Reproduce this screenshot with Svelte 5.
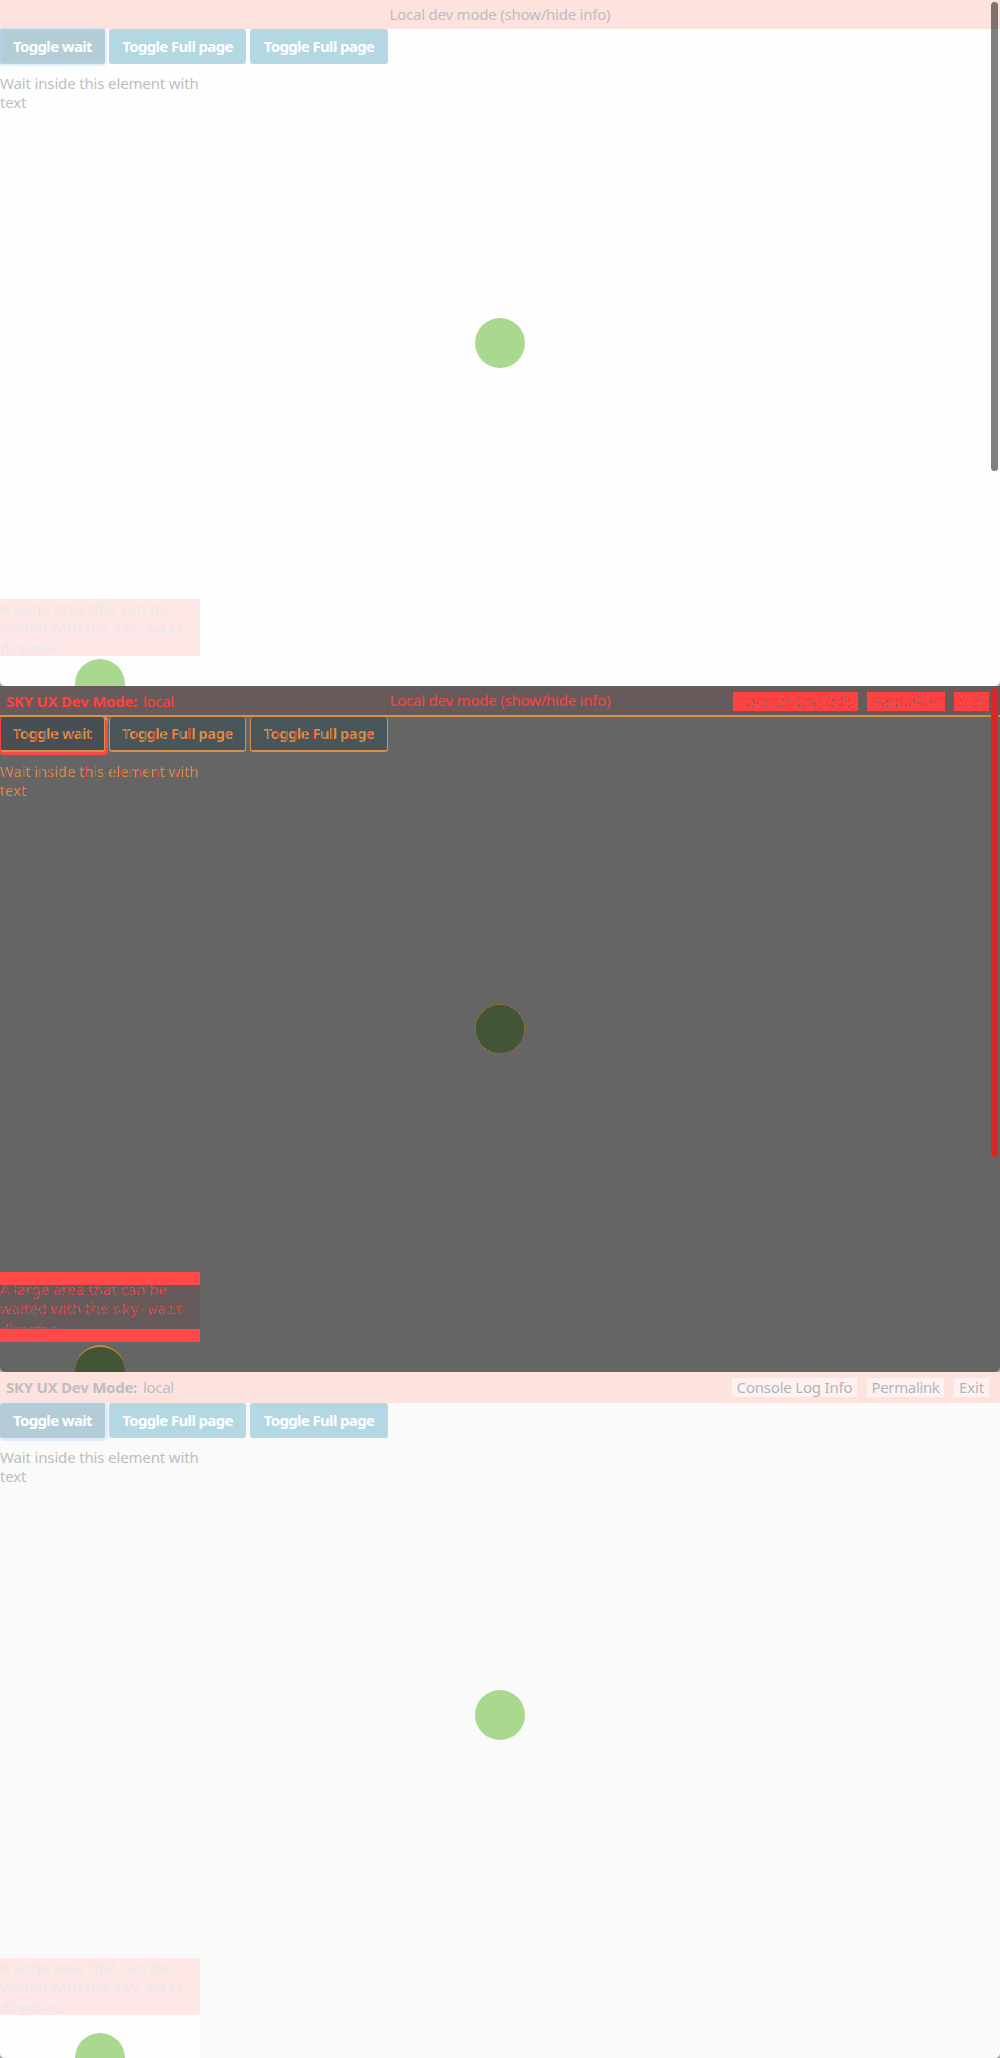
<script>
  const panels = [
    { kind: 'before', toggle: true, dev: false },
    { kind: 'diff', toggle: true, dev: true },
    { kind: 'after', toggle: false, dev: true },
  ];
  const buttons = ['Toggle wait', 'Toggle Full page', 'Toggle Full page'];
  const actions = ['Console Log Info', 'Permalink', 'Exit'];
</script>

<main>
  {#each panels as panel}
    <section class="panel {panel.kind}">
      <header>
        <div class="mode">
          {#if panel.dev}<strong>SKY UX Dev Mode:</strong><span class="local">local</span>{/if}
        </div>
        <div class="toggle">
          {#if panel.toggle}<span class="info">Local dev mode (show/hide info)</span>{/if}
        </div>
        <nav>
          {#if panel.dev}
            {#each actions as action, i}
              <a class="action a{i}" href="#top"><span class="ink">{action}</span></a>
            {/each}
          {/if}
        </nav>
      </header>
      <div class="buttons">
        {#each buttons as label, i}
          <button class="b{i}"><span class="ink">{label}</span></button>
        {/each}
      </div>
      <p class="wait"><span class="ink">Wait inside this element with<br />text</span></p>
      <div class="page-wait"><i class="dot"></i></div>
      <div class="area">
        <p><span class="ink">A large area that can be<br />waited with the <code>sky-wait</code><br />directive.</span></p>
      </div>
      <div class="area-wait"><i class="dot"></i></div>
      {#if panel.kind !== 'after'}<div class="scroll"></div>{/if}
    </section>
  {/each}
</main>

<style>
  :global(body) { background: #fefefe; }
  main { width: 1000px; height: 2058px; overflow: hidden; font: 15px/19px "Noto Sans", sans-serif; background: #a8a8a8; }
  .panel {
    position: relative; display: flex; flex-direction: column; box-sizing: border-box;
    width: 1000px; height: 686px; overflow: hidden; border-radius: 0 0 5px 5px;
    background: #fefefe; color: #bdbec0;
  }
  .after { background: #fafafa; }
  .diff { background: #656565; }
  header {
    flex: none; box-sizing: border-box; display: grid; grid-template-columns: 1fr 222px 1fr; align-items: center;
    height: 29px; background: #fee2dd; white-space: nowrap;
  }
  .after header { height: 31px; }
  .diff header { height: 31px; background: #675a5a; color: #ff4141; border-bottom: 2px solid #d98e48; }
  .mode { display: flex; gap: 6px; padding-left: 6px; }
  .diff .mode { padding-top: 2px; }
  strong { width: 131px; letter-spacing: -0.25px; }
  .local { letter-spacing: -0.3px; }
  .toggle { text-align: center; letter-spacing: -0.22px; }
  nav { display: flex; justify-content: flex-end; gap: 10px; padding-right: 11px; }
  .diff nav { gap: 9px; padding-top: 2px; }
  .action {
    box-sizing: border-box; height: 19px; line-height: 19px; text-align: center;
    background: #fef2f1; color: #b5b4b4; text-decoration: none; letter-spacing: -0.2px;
  }
  .a0 { width: 125px; }
  .a1 { width: 77px; letter-spacing: -0.35px; }
  .a2 { width: 35px; }
  .diff .a1 { width: 78px; }
  .diff .action { background: #ff4141; }
  .buttons { flex: none; display: flex; gap: 4px; height: 35px; }
  button {
    box-sizing: border-box; border: 0; border-radius: 3px; padding: 0; white-space: nowrap;
    font: bold 15px/19px "Noto Sans", sans-serif; letter-spacing: -0.65px;
    color: #fff; background: #b3d7e3;
  }
  .b0 { width: 105px; background: #b3ccd6; }
  .b1 { width: 137px; }
  .b2 { width: 138px; }
  .before .b0 { box-shadow: inset 0 0 3px 1px #b4d1ef, 0 0 3px 1px #c9e0f8; }
  .after .b0 { box-shadow: 1px 1px 1px 2px #dceafa; }
  .diff button { background: #485659; border: 1px solid #d98e48; border-top: 0; border-bottom-width: 2px; }
  .diff .b0 { background: #474f55; border-left-color: #ff4141; box-shadow: 0 3px 0 0 #f34a48, 3px 3px 0 0 #f34a48, 3px 0 0 0 #d98e48; }
  p { margin: 0; white-space: nowrap; }
  .wait { flex: none; height: 38px; margin-top: 10px; letter-spacing: -0.15px; }
  .page-wait { flex: none; height: 50px; margin-top: 206px; display: flex; justify-content: center; }
  .after .page-wait, .diff .page-wait { margin-top: 204px; }
  .dot { display: block; width: 50px; height: 50px; border-radius: 50%; background: #aad88e; }
  .diff .dot { background: #435537; }
  .diff .page-wait .dot { box-sizing: border-box; border: 1px dotted #c68a30; }
  .area { flex: none; box-sizing: border-box; width: 200px; height: 57px; margin-top: 231px; background: #fee8e7; color: #e9e9e8; }
  .after .area { margin-top: 218px; }
  .diff .area { height: 70px; margin-top: 218px; border: solid #ff4848; border-width: 13px 0; background: #675a5a; overflow: hidden; }
  .diff .area p { margin-top: -5px; }
  code { font: 15px/19px "Liberation Mono", monospace; }
  .area-wait { flex: none; width: 200px; height: 60px; display: flex; justify-content: center; padding-top: 3px; }
  .after .area-wait { background: #fefefe; padding-top: 18px; }
  .diff .area-wait .dot { box-sizing: border-box; border-top: 2px solid #c68a30; }
  .diff .ink {
    color: transparent; -webkit-background-clip: text; background-clip: text;
    background-image: repeating-linear-gradient(90deg, #d98e48 0 4px, #8b6a50 4px 5px, #ff4848 5px 6px, #d98e48 6px 9px);
  }
  .diff .action .ink { background-image: repeating-linear-gradient(65deg, #675a5a 0 1px, #ff4848 1px 3px); }
  .diff .area .ink { background-image: repeating-linear-gradient(65deg, #675a5a 0 1px, #ff4848 1px 3px); }
  .scroll { position: absolute; top: 2px; right: 2px; width: 7px; height: 469px; border-radius: 4px; background: rgba(0, 0, 0, 0.5); }
  .diff .scroll { background: #d92626; }
</style>
